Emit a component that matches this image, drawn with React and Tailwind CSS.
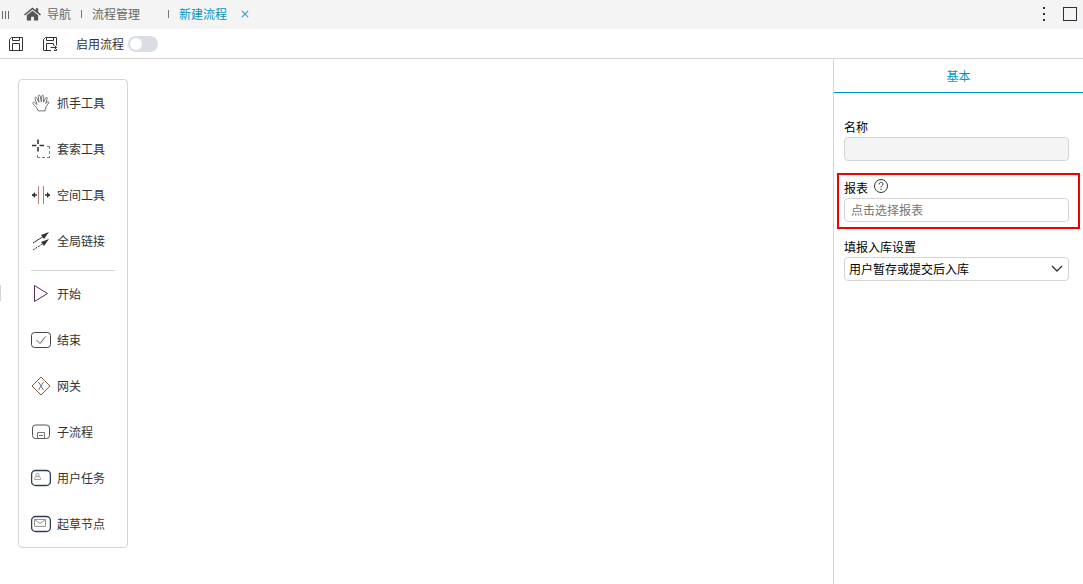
import { useState } from "react";

const TOOLS = [
  { label: "抓手工具", icon: HandIcon },
  { label: "套索工具", icon: LassoIcon },
  { label: "空间工具", icon: SpaceIcon },
  { label: "全局链接", icon: ConnectIcon },
];

const NODES = [
  { label: "开始", icon: StartIcon },
  { label: "结束", icon: EndIcon },
  { label: "网关", icon: GatewayIcon },
  { label: "子流程", icon: SubProcessIcon },
  { label: "用户任务", icon: UserTaskIcon },
  { label: "起草节点", icon: DraftIcon },
];

function Icon({ children, size = 20 }) {
  return (
    <svg
      width={size}
      height={size}
      viewBox={`0 0 ${size} ${size}`}
      fill="none"
      stroke="#333"
      className="shrink-0"
      aria-hidden="true"
    >
      {children}
    </svg>
  );
}

function HandIcon() {
  return (
    <Icon>
      <path
        stroke="#555"
        strokeWidth="0.8"
        strokeLinejoin="round"
        strokeLinecap="round"
        d="M7 17.5 5.5 14.5 2 10.8C1.2 9.8 2.4 8.7 3.5 9.5L6 11.5 4 5.6C3.6 4.2 5.2 3.8 5.8 5L8 9.2 7.2 3.3C7.1 1.9 8.9 1.7 9.2 3L10.3 8.7 10.8 3.2C11 1.9 12.6 2 12.6 3.4L12.6 9.2 14.6 5C15.2 3.8 16.6 4.3 16.2 5.7L14.8 10.5 15.8 9.4C16.8 8.3 18.3 8.7 17.7 9.9L14.8 14.2 14.2 17.5Z"
      />
    </Icon>
  );
}

function LassoIcon() {
  return (
    <Icon>
      <path strokeWidth="1.6" d="M7 0.500v4.500M7 8v4.500M1 6.500h4.500M8.500 6.500H13" />
      <path d="M16 7.500h2.500V10M18.500 12v3M18.500 17v1.500H16M14 18.500h-3M9 18.500H6.500V16" stroke="#777" />
    </Icon>
  );
}

function SpaceIcon() {
  return (
    <Icon>
      <path d="M7.500 1v18" stroke="#b98080" />
      <path d="M12.500 1v18" stroke="#8a85a0" />
      <path d="M1 10h5M14 10h5" strokeWidth="1.5" />
      <path d="M4 7 1 10l3 3zM16 7l3 3-3 3z" fill="#333" stroke="none" />
    </Icon>
  );
}

function ConnectIcon() {
  return (
    <Icon>
      <path d="M2 12 13 5" />
      <path d="M2 19 13 12" strokeDasharray="2 1" />
      <path d="m10 4 8-3-5 7zM10 11l8-3-5 7z" fill="#333" stroke="none" />
    </Icon>
  );
}

function StartIcon() {
  return (
    <Icon>
      <path d="M3.500 1.500v16L16.500 9.500z" strokeLinejoin="round" stroke="#5b2a66" />
    </Icon>
  );
}

function EndIcon() {
  return (
    <Icon>
      <rect x="0.500" y="2.500" width="19" height="15" rx="3" stroke="#444" />
      <path d="m5.500 10 3.500 3.500 5.500-7" stroke="#555" />
    </Icon>
  );
}

function GatewayIcon() {
  return (
    <Icon>
      <path d="M10 1 19 10l-9 9-9-9z" stroke="#7d5f3c" />
      <path d="m7.500 6 5 8M12.500 6l-5 8" stroke="#777" />
    </Icon>
  );
}

function SubProcessIcon() {
  return (
    <Icon>
      <rect x="1.500" y="3" width="17" height="13.500" rx="3" stroke="#555" />
      <path d="M6.500 16.500v-6h7v6M8 13.500h4" stroke="#777" />
    </Icon>
  );
}

function UserTaskIcon() {
  return (
    <Icon>
      <rect x="0.600" y="2.500" width="18.800" height="15" rx="4" stroke="#2c3e50" strokeWidth="1.300" />
      <circle cx="6.500" cy="7" r="1.700" stroke="#888" strokeWidth="0.8" />
      <path d="M3.500 11.500c0-3 1.500-3 3-3s3 0 3 3z" stroke="#888" strokeWidth="0.8" />
    </Icon>
  );
}

function DraftIcon() {
  return (
    <Icon>
      <rect x="0.600" y="2.500" width="18.800" height="15" rx="4" stroke="#2c3e50" strokeWidth="1.300" />
      <path d="M3.500 5.500h11v7h-11zM3.500 5.500 9 9.500l5.500-4" stroke="#888" strokeWidth="0.9" />
    </Icon>
  );
}

function HomeIcon() {
  return (
    <svg width="17" height="14" viewBox="0 0 18 14" fill="#555" aria-hidden="true">
      <path d="M9 0 0 7.500l1 1.200L9 2.200l8 6.500 1-1.200-3-2.500V1h-2.500v2z" />
      <path d="M9 3.500 3 8.400V14h4.500v-4h3v4H15V8.400z" />
    </svg>
  );
}

function SaveIcon({ withExit }) {
  return (
    <Icon size={16}>
      <path d={withExit ? "M9 14.500H1.500v-11l2-2h11v8M14.500 13v1.500H12" : "M1.500 3.500l2-2h11v13h-13z"} />
      <path d="M4.500 1.500v3h7v-3" />
      <path d={withExit ? "M4.500 14.500v-7h7v2M8.500 11.500h6M12.500 9.500l2 2-2 2" : "M4.500 14.500v-7h7v7"} />
    </Icon>
  );
}

function Palette() {
  return (
    <aside className="w-[110px] rounded border border-[#d5d5d5] bg-white px-3">
      <PaletteGroup items={TOOLS} />
      <hr className="mt-1.5 border-[#d5d5d5]" />
      <PaletteGroup items={NODES} />
    </aside>
  );
}

function PaletteGroup({ items }) {
  return (
    <ul>
      {items.map(({ label, icon: ItemIcon }) => (
        <li key={label}>
          <button type="button" className="flex h-[46px] w-full items-center gap-1.5 whitespace-nowrap">
            <ItemIcon />
            <span>{label}</span>
          </button>
        </li>
      ))}
    </ul>
  );
}

function TopBar() {
  return (
    <header className="flex h-[29px] items-center bg-[#f4f4f4] text-[#666]">
      <button type="button" aria-label="展开" className="ml-0.5 flex h-2 w-[7px] justify-between">
        <span className="h-full w-px bg-[#666]" />
        <span className="h-full w-px bg-[#666]" />
        <span className="h-full w-px bg-[#666]" />
      </button>
      <nav className="ml-[15px] flex h-7 items-center self-start">
        <a href="#nav" className="flex items-center gap-1.5">
          <HomeIcon />
          <span>导航</span>
        </a>
        <span className="mx-2.5 h-2 w-px bg-[#777]" />
        <a href="#manage">流程管理</a>
        <span className="mr-2.5 ml-7 h-2 w-px bg-[#777]" />
        <a href="#new" className="text-[#0095c8]">新建流程</a>
        <button type="button" aria-label="关闭" className="ml-3.5 text-[#3a9fc8]">
          <svg width="8" height="8" viewBox="0 0 9 9" stroke="currentColor" strokeWidth="1.3" aria-hidden="true">
            <path d="m1 1 7 7M8 1 1 8" />
          </svg>
        </button>
      </nav>
      <div className="mr-1.5 ml-auto flex h-7 items-center gap-[18px] self-start">
        <button type="button" aria-label="更多" className="flex flex-col gap-1">
          <span className="size-0.5 bg-[#333]" />
          <span className="size-0.5 bg-[#333]" />
          <span className="size-0.5 bg-[#333]" />
        </button>
        <button type="button" aria-label="最大化" className="size-3.5 border border-[#3a2a3f]" />
      </div>
    </header>
  );
}

function ToolBar() {
  const [enabled, setEnabled] = useState(false);

  return (
    <div className="flex h-[30px] items-center border-b border-[#d5d5d5] pl-2">
      <button type="button" aria-label="保存">
        <SaveIcon />
      </button>
      <button type="button" aria-label="保存并退出" className="ml-[18px]">
        <SaveIcon withExit />
      </button>
      <label htmlFor="enabled" className="ml-[18px]">启用流程</label>
      <input
        id="enabled"
        type="checkbox"
        checked={enabled}
        onChange={(e) => setEnabled(e.target.checked)}
        className="ml-1 h-4 w-[30px] appearance-none rounded-full bg-[#d9dde4] p-0.5 before:block before:size-3 before:rounded-full before:bg-white checked:bg-[#0095c8] checked:before:ml-auto"
      />
    </div>
  );
}

function Properties() {
  return (
    <aside className="w-[250px] shrink-0 border-l border-[#d5d5d5] text-black">
      <button type="button" className="block h-[34px] w-full border-b border-[#0095c8] text-[#0095c8]">
        基本
      </button>
      <form>
        <div className="pt-6 pr-3.5 pl-2.5">
          <label htmlFor="name" className="block h-5">名称</label>
          <input id="name" disabled className="block h-6 w-full rounded border border-[#d5d5d5] bg-[#f4f4f4] px-1.5" />
        </div>
        <div className="mx-[3px] mt-3 border-2 border-[#f00000] pt-[3px] pr-[9px] pb-[5px] pl-[5px]">
          <div className="flex h-5 items-center gap-1.5">
            <label htmlFor="report">报表</label>
            <button type="button" aria-label="帮助" className="mb-1">
              <Icon size={14}>
                <circle cx="7" cy="7" r="6.500" />
                <path d="M5 5.500C5 2.500 9.300 2.800 9 5.200 8.900 6.500 7 6.600 7 8.400M7 9.700v1.300" />
              </Icon>
            </button>
          </div>
          <input
            id="report"
            placeholder="点击选择报表"
            className="block h-6 w-full rounded border border-[#d5d5d5] bg-white px-1.5 pb-0.5 placeholder:text-[#757575]"
          />
        </div>
        <div className="mt-2 pr-3.5 pl-2.5">
          <label htmlFor="storage" className="block h-5">填报入库设置</label>
          <div className="relative">
            <select
              id="storage"
              className="block h-6 w-full appearance-none rounded border border-[#d5d5d5] bg-white px-1"
            >
              <option>用户暂存或提交后入库</option>
            </select>
            <svg
              width="12"
              height="8"
              viewBox="0 0 12 8"
              fill="none"
              stroke="#333"
              strokeWidth="1.3"
              className="pointer-events-none absolute top-2 right-1.5"
              aria-hidden="true"
            >
              <path d="m1 1 5 5 5-5" />
            </svg>
          </div>
        </div>
      </form>
    </aside>
  );
}

export default function App() {
  return (
    <div className="flex min-h-screen flex-col bg-white font-['Noto_Sans_CJK_SC',sans-serif] text-xs leading-5 text-[#333]">
      <TopBar />
      <ToolBar />
      <div className="flex flex-1">
        <div className="flex w-[18px] items-center pb-[58px]">
          <span className="h-4 w-px bg-[#d5d5d5]" />
        </div>
        <main className="flex-1 pt-5">
          <Palette />
        </main>
        <Properties />
      </div>
    </div>
  );
}
